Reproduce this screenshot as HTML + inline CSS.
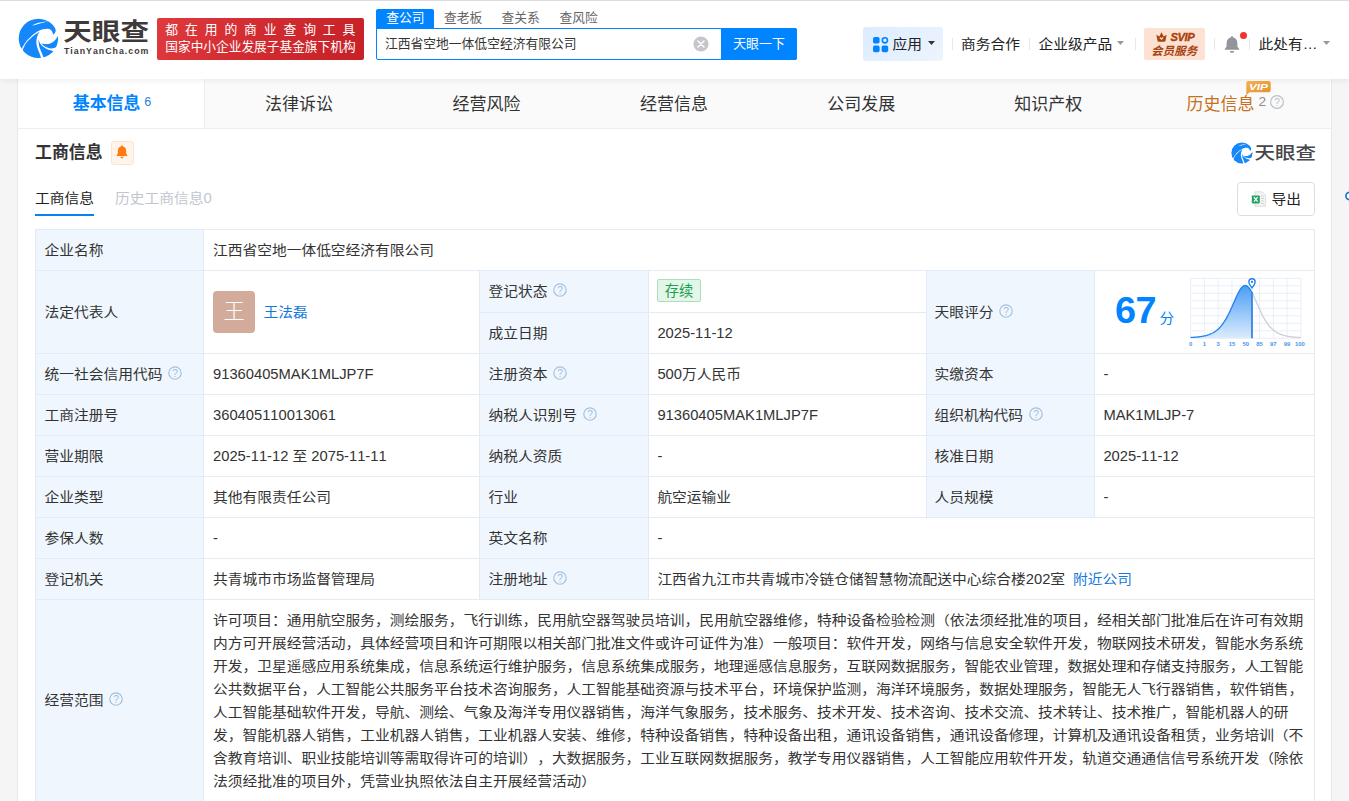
<!DOCTYPE html>
<html lang="zh-CN"><head><meta charset="utf-8"><title>江西省空地一体低空经济有限公司 - 天眼查</title>
<style>
html,body{margin:0;padding:0;}
body{width:1349px;height:801px;overflow:hidden;background:#f5f5f5;font-family:"Liberation Sans","Noto Sans CJK SC",sans-serif;font-size:14.74px;color:#333;}
#p{position:relative;width:1349px;height:801px;overflow:hidden;}
#p>div,#p>.a{position:absolute;}
.c{display:inline-block;transform:scaleY(0.89);transform-origin:0 53%;}
.t{white-space:nowrap;text-spacing-trim:space-all;font-kerning:none;height:20px;line-height:20px;}
</style></head><body><div id="p">
<div style="left:0px;top:0px;width:1349px;height:801px;background:#f5f5f5;"></div>
<div style="left:17px;top:79px;width:1315px;height:722px;background:#e9e9e9;"></div>
<div style="left:18px;top:79px;width:1313px;height:722px;background:#fff;"></div>
<div style="left:18px;top:79px;width:1312px;height:49px;background:#fafafa;"></div>
<div style="left:18px;top:79px;width:186px;height:49px;background:#fff;"></div>
<div style="left:204px;top:79px;width:1px;height:49px;background:#f0f0f0;"></div>
<div style="left:18px;top:128px;width:1313px;height:1px;background:#eeeeee;"></div>
<div style="left:0px;top:0px;width:1349px;height:79px;background:#fff;box-shadow:0 1px 6px rgba(0,0,0,.075);"></div>
<div style="left:0px;top:0px;width:1349px;height:1px;background:#dcdcdc;"></div>
<svg class="a" style="left:18px;top:18px" width="41" height="41" viewBox="0 0 41 41"><circle cx="20.4" cy="20.4" r="19.7" fill="#1487fa"/><path d="M21.6 13.7C20.75 14.24 18.06 15.77 16.50 16.95C14.94 18.13 13.66 19.39 12.24 20.77C10.82 22.15 9.32 23.25 8.00 25.22C6.68 27.19 4.92 31.37 4.30 32.60L3.20 31.30C4.00 30.04 6.49 25.74 8.00 23.74C9.51 21.74 10.83 20.66 12.24 19.28C13.65 17.90 14.93 16.59 16.49 15.46C18.05 14.33 20.16 13.20 21.58 12.49C22.99 11.78 23.57 11.50 24.98 11.22C26.39 10.94 28.66 10.58 30.07 10.79C31.48 11.00 32.62 11.64 33.47 12.49C34.32 13.34 34.80 15.20 35.16 15.88C35.52 16.57 35.53 16.48 35.60 16.60C35.83 16.30 36.65 15.49 37.00 14.80C37.35 14.12 37.66 13.37 37.71 12.49C37.76 11.61 37.36 10.02 37.29 9.52L41.00 9.50L41.00 18.40L39.62 18.43C39.44 18.71 39.23 19.28 38.56 20.13C37.89 20.98 36.79 22.56 35.59 23.52C34.39 24.48 32.76 25.43 31.34 25.86C29.93 26.29 28.41 26.19 27.10 26.07C25.79 25.95 24.09 25.30 23.49 25.14C23.88 25.58 24.88 27.05 25.83 27.77C26.78 28.49 27.95 29.03 29.22 29.47C30.49 29.91 31.94 30.45 33.47 30.40C35.00 30.35 37.58 29.40 38.40 29.20L40.00 31.00L37.00 35.00L35.60 33.40C35.25 33.24 34.53 32.81 33.47 32.44C32.41 32.07 30.63 31.80 29.22 31.16C27.80 30.52 26.18 29.61 24.98 28.62C23.78 27.63 22.74 26.49 22.00 25.22C21.26 23.95 20.77 21.69 20.52 20.98C20.55 21.69 20.55 23.80 20.73 25.22C20.91 26.63 21.15 28.05 21.58 29.47C22.00 30.88 22.71 32.30 23.28 33.71C23.85 35.12 24.54 36.86 24.98 37.96C25.42 39.06 25.75 39.91 25.90 40.30L23.30 41.00L22.43 37.96C22.22 37.39 21.69 35.98 21.16 34.56C20.63 33.15 19.71 31.03 19.25 29.47C18.79 27.91 18.51 26.63 18.40 25.22C18.29 23.80 18.36 22.39 18.61 20.98C18.86 19.57 19.38 17.94 19.88 16.73C20.38 15.52 21.31 14.21 21.60 13.70Z" fill="#fff"/><path d="M13.8 7.7C14.33 7.40 15.63 6.43 17.00 5.90C18.37 5.38 19.80 5.00 22.00 4.55C24.20 4.10 28.83 3.43 30.20 3.20C28.83 3.58 24.20 4.87 22.00 5.50C19.80 6.13 18.37 6.63 17.00 7.00C15.63 7.37 14.33 7.58 13.80 7.70Z" fill="#fff"/></svg>
<div class="t" style="left:63.2px;top:14.5px;font-size:28.6px;color:#3e3a39;height:34px;line-height:34px;font-weight:700;transform:scaleY(0.84);transform-origin:0 50%;">天眼查</div>
<div class="t" style="left:64px;top:45.0px;font-size:8.8px;color:#3e3a39;height:12px;line-height:12px;font-weight:700;letter-spacing:1.0px;">TianYanCha.com</div>
<div style="left:157px;top:18px;width:206.5px;height:42px;background:linear-gradient(120deg,#e0393e 0%,#d12b31 50%,#c52127 100%);border-radius:2px;"></div>
<div class="t" style="left:165.3px;top:22.0px;font-size:12.8px;color:#fff;height:16px;line-height:16px;letter-spacing:6.9px;">都在用的商业查询工具</div>
<div class="t" style="left:165.3px;top:38.8px;font-size:12.7px;color:#fff;height:16px;line-height:16px;">国家中小企业发展子基金旗下机构</div>
<div style="left:376px;top:9px;width:58px;height:20px;background:#0084ff;border-radius:2px 2px 0 0;"></div>
<div class="t" style="left:386.3px;top:9.2px;font-size:12.77px;color:#fff;height:18px;line-height:18px;">查公司</div>
<div class="t" style="left:444px;top:9.2px;font-size:12.77px;color:#666;height:18px;line-height:18px;">查老板</div>
<div class="t" style="left:501.5px;top:9.2px;font-size:12.77px;color:#666;height:18px;line-height:18px;">查关系</div>
<div class="t" style="left:559.5px;top:9.2px;font-size:12.77px;color:#666;height:18px;line-height:18px;">查风险</div>
<div style="left:376px;top:28px;width:421px;height:32px;background:#fff;border:1px solid #0084ff;border-radius:0 2px 2px 2px;box-sizing:border-box;"></div>
<div style="left:721px;top:28px;width:76px;height:32px;background:#0084ff;border-radius:0 2px 2px 0;"></div>
<div class="t" style="left:385px;top:34.0px;font-size:12.77px;color:#333;">江西省空地一体低空经济有限公司</div>
<div class="t" style="left:721.0px;top:34.0px;font-size:12.9px;color:#fff;width:76px;text-align:center;">天眼一下</div>
<svg class="a" style="left:693px;top:36px" width="16" height="16" viewBox="0 0 16 16"><circle cx="8" cy="8" r="7.6" fill="#c4c6cc"/><path d="M5 5 L11 11 M11 5 L5 11" stroke="#fff" stroke-width="1.5" stroke-linecap="round"/></svg>
<div style="left:863px;top:27px;width:80px;height:34px;background:linear-gradient(135deg,#dcecff 0%,#e6f1ff 60%,#edf4fc 100%);border-radius:3px;"></div>
<svg class="a" style="left:872px;top:35.6px" width="18" height="18" viewBox="0 0 18 18">
<rect x="1" y="1" width="6.6" height="6.6" rx="1.8" fill="#0084ff"/>
<rect x="1" y="9.6" width="6.6" height="6.6" rx="1.8" fill="#0084ff"/>
<rect x="9.6" y="9.6" width="6.6" height="6.6" rx="1.8" fill="#0084ff"/>
<circle cx="12.9" cy="4.3" r="2.6" fill="none" stroke="#0084ff" stroke-width="1.6"/></svg>
<div class="t" style="left:892.5px;top:34.0px;color:#222;"><span class="c">应用</span></div>
<svg class="a" style="left:927.7px;top:41.4px" width="7" height="4" viewBox="0 0 7 4"><path d="M0 0 H7 L3.5 4 Z" fill="#333"/></svg>
<div style="left:952px;top:38px;width:1px;height:12px;background:#e8e8eb;"></div>
<div style="left:1029px;top:38px;width:1px;height:12px;background:#e8e8eb;"></div>
<div style="left:1135px;top:38px;width:1px;height:12px;background:#e8e8eb;"></div>
<div style="left:1214px;top:38px;width:1px;height:12px;background:#e8e8eb;"></div>
<div style="left:1249px;top:38px;width:1px;height:12px;background:#e8e8eb;"></div>
<div class="t" style="left:961px;top:34.0px;color:#222;"><span class="c">商务合作</span></div>
<div class="t" style="left:1038.5px;top:34.0px;color:#222;"><span class="c">企业级产品</span></div>
<svg class="a" style="left:1117.0px;top:41.2px" width="7" height="4" viewBox="0 0 7 4"><path d="M0 0 H7 L3.5 4 Z" fill="#999"/></svg>
<div style="left:1144px;top:28px;width:61px;height:32px;background:#fde2d3;border-radius:2px;"></div>
<svg class="a" style="left:1156px;top:32px" width="12" height="11" viewBox="0 0 12 11"><path d="M0.4 2.7 L3.3 4.5 L5.5 0.3 L7.7 4.5 L10.6 2.7 L9.5 8.7 Q9.4 9.8 8.3 9.8 H2.7 Q1.6 9.8 1.5 8.7 Z" fill="#a8430f"/><path d="M3.8 5.5 L5.5 7.3 L7.2 5.5" fill="none" stroke="#fde2d3" stroke-width="1.1"/></svg>
<div class="t" style="left:1170.6px;top:31.2px;font-size:11.2px;color:#a8430f;height:12px;line-height:12px;font-weight:700;font-style:italic;letter-spacing:-0.5px;-webkit-text-stroke:0.35px #a8430f;">SVIP</div>
<div class="t" style="left:1143.8px;top:43.9px;font-size:11.4px;color:#a8430f;height:14px;line-height:14px;font-weight:700;font-style:italic;letter-spacing:0.1px;width:61px;text-align:center;">会员服务</div>
<svg class="a" style="left:1223px;top:35px" width="18" height="19" viewBox="0 0 18 19"><path d="M9 1.2 C9.8 1.2 10.3 1.8 10.3 2.5 C13 3.2 14.4 5.4 14.4 8.2 V11.6 L16.2 14 V14.8 H1.8 V14 L3.6 11.6 V8.2 C3.6 5.4 5 3.2 7.7 2.5 C7.7 1.8 8.2 1.2 9 1.2 Z" fill="#92959b"/><path d="M6.8 16 H11.2 C11 17.2 10.1 17.9 9 17.9 C7.9 17.9 7 17.2 6.8 16 Z" fill="#92959b"/></svg>
<div style="left:1240px;top:31.5px;width:7px;height:7px;background:#f5302f;border-radius:50%;"></div>
<div class="t" style="left:1258.5px;top:34.0px;color:#222;"><span class="c">此处有</span>…</div>
<svg class="a" style="left:1322.5px;top:41.2px" width="7" height="4" viewBox="0 0 7 4"><path d="M0 0 H7 L3.5 4 Z" fill="#999"/></svg>
<div class="t" style="left:72.8px;top:92.2px;font-size:16.9px;color:#0084ff;height:24px;line-height:24px;font-weight:700;">基本信息</div>
<div class="t" style="left:144.3px;top:94.2px;font-size:12.6px;color:#2a7fd8;height:16px;line-height:16px;">6</div>
<div class="t" style="left:149.0px;top:92.6px;font-size:17.0px;color:#333;height:24px;line-height:24px;width:300px;text-align:center;">法律诉讼</div>
<div class="t" style="left:336.5px;top:92.6px;font-size:17.0px;color:#333;height:24px;line-height:24px;width:300px;text-align:center;">经营风险</div>
<div class="t" style="left:524.0px;top:92.6px;font-size:17.0px;color:#333;height:24px;line-height:24px;width:300px;text-align:center;">经营信息</div>
<div class="t" style="left:711.3px;top:92.6px;font-size:17.0px;color:#333;height:24px;line-height:24px;width:300px;text-align:center;">公司发展</div>
<div class="t" style="left:898.3px;top:92.6px;font-size:17.0px;color:#333;height:24px;line-height:24px;width:300px;text-align:center;">知识产权</div>
<div class="t" style="left:1186.6px;top:92.7px;font-size:17.0px;color:#c4701c;height:24px;line-height:24px;">历史信息</div>
<div class="t" style="left:1258.6px;top:94.2px;font-size:13.7px;color:#8c8c8c;height:16px;line-height:16px;">2</div>
<svg class="a" style="left:1270.2px;top:95.2px" width="14" height="14" viewBox="0 0 14 14"><circle cx="7" cy="7" r="6.4" fill="none" stroke="#bcc0c6" stroke-width="1.15"/><text x="7" y="10.50" text-anchor="middle" font-size="10" fill="#bcc0c6" font-family="Liberation Sans,sans-serif">?</text></svg>
<svg class="a" style="left:1244px;top:80px" width="30" height="17" viewBox="0 0 30 17"><defs><linearGradient id="vg" x1="0" y1="0" x2="1" y2="1"><stop offset="0" stop-color="#f6b04f"/><stop offset="1" stop-color="#e0902f"/></linearGradient></defs><path d="M4.3 1.1 H24.7 Q26.7 1.1 26.7 3.1 V10.2 Q26.7 12.2 24.7 12.2 H5.6 L2.3 15.2 V3.1 Q2.3 1.1 4.3 1.1 Z" fill="url(#vg)"/><text x="4.9" y="9.9" textLength="19" lengthAdjust="spacingAndGlyphs" font-size="8.6" font-weight="700" font-style="italic" fill="#fff" font-family="Liberation Sans,sans-serif">VIP</text></svg>
<div class="t" style="left:35px;top:140.8px;font-size:16.9px;color:#333;height:24px;line-height:24px;font-weight:700;">工商信息</div>
<div style="left:111px;top:141px;width:23px;height:24px;background:#fff4ea;border:1px solid #fde3cb;border-radius:3px;box-sizing:border-box;"></div>
<svg class="a" style="left:116.3px;top:145.2px" width="12" height="14" viewBox="0 0 12 14"><path d="M6 0.6 C6.6 0.6 7 1 7 1.6 C9 2.1 10.2 3.8 10.2 6 V8.6 L11.4 10.4 V11 H0.6 V10.4 L1.8 8.6 V6 C1.8 3.8 3 2.1 5 1.6 C5 1 5.4 0.6 6 0.6 Z M4.4 11.8 H7.6 C7.4 12.8 6.8 13.3 6 13.3 C5.2 13.3 4.6 12.8 4.4 11.8 Z" fill="#ff7a14"/></svg>
<svg class="a" style="left:1231px;top:142px" width="22" height="22" viewBox="0 0 41 41"><circle cx="20.4" cy="20.4" r="19.7" fill="#1487fa"/><path d="M21.6 13.7C20.75 14.24 18.06 15.77 16.50 16.95C14.94 18.13 13.66 19.39 12.24 20.77C10.82 22.15 9.32 23.25 8.00 25.22C6.68 27.19 4.92 31.37 4.30 32.60L3.20 31.30C4.00 30.04 6.49 25.74 8.00 23.74C9.51 21.74 10.83 20.66 12.24 19.28C13.65 17.90 14.93 16.59 16.49 15.46C18.05 14.33 20.16 13.20 21.58 12.49C22.99 11.78 23.57 11.50 24.98 11.22C26.39 10.94 28.66 10.58 30.07 10.79C31.48 11.00 32.62 11.64 33.47 12.49C34.32 13.34 34.80 15.20 35.16 15.88C35.52 16.57 35.53 16.48 35.60 16.60C35.83 16.30 36.65 15.49 37.00 14.80C37.35 14.12 37.66 13.37 37.71 12.49C37.76 11.61 37.36 10.02 37.29 9.52L41.00 9.50L41.00 18.40L39.62 18.43C39.44 18.71 39.23 19.28 38.56 20.13C37.89 20.98 36.79 22.56 35.59 23.52C34.39 24.48 32.76 25.43 31.34 25.86C29.93 26.29 28.41 26.19 27.10 26.07C25.79 25.95 24.09 25.30 23.49 25.14C23.88 25.58 24.88 27.05 25.83 27.77C26.78 28.49 27.95 29.03 29.22 29.47C30.49 29.91 31.94 30.45 33.47 30.40C35.00 30.35 37.58 29.40 38.40 29.20L40.00 31.00L37.00 35.00L35.60 33.40C35.25 33.24 34.53 32.81 33.47 32.44C32.41 32.07 30.63 31.80 29.22 31.16C27.80 30.52 26.18 29.61 24.98 28.62C23.78 27.63 22.74 26.49 22.00 25.22C21.26 23.95 20.77 21.69 20.52 20.98C20.55 21.69 20.55 23.80 20.73 25.22C20.91 26.63 21.15 28.05 21.58 29.47C22.00 30.88 22.71 32.30 23.28 33.71C23.85 35.12 24.54 36.86 24.98 37.96C25.42 39.06 25.75 39.91 25.90 40.30L23.30 41.00L22.43 37.96C22.22 37.39 21.69 35.98 21.16 34.56C20.63 33.15 19.71 31.03 19.25 29.47C18.79 27.91 18.51 26.63 18.40 25.22C18.29 23.80 18.36 22.39 18.61 20.98C18.86 19.57 19.38 17.94 19.88 16.73C20.38 15.52 21.31 14.21 21.60 13.70Z" fill="#fff"/><path d="M13.8 7.7C14.33 7.40 15.63 6.43 17.00 5.90C18.37 5.38 19.80 5.00 22.00 4.55C24.20 4.10 28.83 3.43 30.20 3.20C28.83 3.58 24.20 4.87 22.00 5.50C19.80 6.13 18.37 6.63 17.00 7.00C15.63 7.37 14.33 7.58 13.80 7.70Z" fill="#fff"/></svg>
<div class="t" style="left:1254.6px;top:139.6px;font-size:20.5px;color:#46464b;height:26px;line-height:26px;font-weight:500;transform:scaleY(0.85);transform-origin:0 50%;">天眼查</div>
<div class="t" style="left:35px;top:187.8px;color:#222;"><span class="c">工商信息</span></div>
<div class="t" style="left:115px;top:187.8px;color:#c1c6cf;"><span class="c">历史工商信息</span>0</div>
<div style="left:35px;top:214px;width:59px;height:2px;background:#0a80f5;"></div>
<div style="left:1237px;top:182px;width:78px;height:34px;background:#fff;border:1px solid #dadde5;border-radius:4px;box-sizing:border-box;"></div>
<svg class="a" style="left:1251px;top:191px" width="16" height="16" viewBox="0 0 16 16"><path d="M4 0.8 H11 L14.6 4.4 V15.2 H4 Z" fill="#f4f4f4" stroke="#d4d4d4" stroke-width="0.8"/><path d="M10 5 H13 M10 7.5 H13 M10 10 H13 M10 12.5 H13" stroke="#cfcfcf" stroke-width="0.9"/><rect x="0.8" y="4.4" width="8" height="8" rx="0.8" fill="#21a366"/><path d="M3 6.2 L6.6 10.6 M6.6 6.2 L3 10.6" stroke="#fff" stroke-width="1.2"/></svg>
<div class="t" style="left:1271.5px;top:189.0px;color:#222;"><span class="c">导出</span></div>
<svg class="a" style="left:1340px;top:190px" width="12" height="12" viewBox="0 0 12 12"><circle cx="9.6" cy="6" r="3.7" fill="#fff" stroke="#1672d6" stroke-width="1.6"/></svg>
<div style="left:36px;top:230px;width:167px;height:571px;background:#eff6fd;"></div>
<div style="left:480px;top:271px;width:168px;height:328px;background:#eff6fd;"></div>
<div style="left:927px;top:271px;width:167px;height:246px;background:#eff6fd;"></div>
<div style="left:35px;top:229px;width:1280px;height:1px;background:#e3ecf5;"></div>
<div style="left:35px;top:270px;width:1280px;height:1px;background:#e3ecf5;"></div>
<div style="left:35px;top:353px;width:1280px;height:1px;background:#e3ecf5;"></div>
<div style="left:35px;top:394px;width:1280px;height:1px;background:#e3ecf5;"></div>
<div style="left:35px;top:435px;width:1280px;height:1px;background:#e3ecf5;"></div>
<div style="left:35px;top:476px;width:1280px;height:1px;background:#e3ecf5;"></div>
<div style="left:35px;top:517px;width:1280px;height:1px;background:#e3ecf5;"></div>
<div style="left:35px;top:558px;width:1280px;height:1px;background:#e3ecf5;"></div>
<div style="left:35px;top:599px;width:1280px;height:1px;background:#e3ecf5;"></div>
<div style="left:479px;top:312px;width:447px;height:1px;background:#e3ecf5;"></div>
<div style="left:35px;top:229px;width:1px;height:572px;background:#e3ecf5;"></div>
<div style="left:1314px;top:229px;width:1px;height:572px;background:#e3ecf5;"></div>
<div style="left:203px;top:229px;width:1px;height:572px;background:#e3ecf5;"></div>
<div style="left:479px;top:270px;width:1px;height:329px;background:#e3ecf5;"></div>
<div style="left:648px;top:270px;width:1px;height:329px;background:#e3ecf5;"></div>
<div style="left:926px;top:270px;width:1px;height:247px;background:#e3ecf5;"></div>
<div style="left:1094px;top:270px;width:1px;height:247px;background:#e3ecf5;"></div>
<div class="t" style="left:44.6px;top:240.0px;"><span class="c">企业名称</span></div>
<div class="t" style="left:213px;top:240.0px;"><span class="c">江西省空地一体低空经济有限公司</span></div>
<div class="t" style="left:44.6px;top:302.0px;"><span class="c">法定代表人</span></div>
<div style="left:213px;top:291px;width:42px;height:42px;background:#d3ab9b;border-radius:4px;"></div>
<div class="t" style="left:213.0px;top:299.0px;font-size:21.2px;color:#fff;height:26px;line-height:26px;font-weight:300;width:42px;text-align:center;">王</div>
<div class="t" style="left:263.5px;top:302.0px;color:#1379de;"><span class="c">王法磊</span></div>
<div class="t" style="left:488.6px;top:280.8px;"><span class="c">登记状态</span></div>
<svg class="a" style="left:553.46px;top:282.90000000000003px" width="14" height="14" viewBox="0 0 14 14"><circle cx="7" cy="7" r="6.2" fill="none" stroke="#a4c0e0" stroke-width="1.15"/><text x="7" y="10.57" text-anchor="middle" font-size="10.2" fill="#a4c0e0" font-family="Liberation Sans,sans-serif">?</text></svg>
<div style="left:657px;top:279px;width:44px;height:23px;background:#e3f6e9;border:1px solid #a9dfba;border-radius:2px;box-sizing:border-box;"></div>
<div class="t" style="left:657.0px;top:280.9px;font-size:14.2978px;color:#1ba04f;width:44px;text-align:center;">存续</div>
<div class="t" style="left:488.6px;top:323.0px;"><span class="c">成立日期</span></div>
<div class="t" style="left:657.4px;top:323.0px;">2025-11-12</div>
<div class="t" style="left:934.6px;top:302.0px;"><span class="c">天眼评分</span></div>
<svg class="a" style="left:999.46px;top:304.1px" width="14" height="14" viewBox="0 0 14 14"><circle cx="7" cy="7" r="6.2" fill="none" stroke="#a4c0e0" stroke-width="1.15"/><text x="7" y="10.57" text-anchor="middle" font-size="10.2" fill="#a4c0e0" font-family="Liberation Sans,sans-serif">?</text></svg>
<div class="t" style="left:1115px;top:290.4px;font-size:37.8px;color:#0084ff;height:40px;line-height:40px;font-weight:700;letter-spacing:-0.4px;">67</div>
<div class="t" style="left:1159.5px;top:307.6px;color:#0084ff;"><span class="c">分</span></div>
<div class="t" style="left:44.6px;top:364.0px;"><span class="c">统一社会信用代码</span></div>
<svg class="a" style="left:168.42000000000002px;top:366.1px" width="14" height="14" viewBox="0 0 14 14"><circle cx="7" cy="7" r="6.2" fill="none" stroke="#a4c0e0" stroke-width="1.15"/><text x="7" y="10.57" text-anchor="middle" font-size="10.2" fill="#a4c0e0" font-family="Liberation Sans,sans-serif">?</text></svg>
<div class="t" style="left:213px;top:364.0px;">91360405MAK1MLJP7F</div>
<div class="t" style="left:488.6px;top:364.0px;"><span class="c">注册资本</span></div>
<svg class="a" style="left:553.46px;top:366.1px" width="14" height="14" viewBox="0 0 14 14"><circle cx="7" cy="7" r="6.2" fill="none" stroke="#a4c0e0" stroke-width="1.15"/><text x="7" y="10.57" text-anchor="middle" font-size="10.2" fill="#a4c0e0" font-family="Liberation Sans,sans-serif">?</text></svg>
<div class="t" style="left:657.4px;top:364.0px;">500<span class="c">万人民币</span></div>
<div class="t" style="left:934.6px;top:364.0px;"><span class="c">实缴资本</span></div>
<div class="t" style="left:1103.4px;top:364.0px;">-</div>
<div class="t" style="left:44.6px;top:405.0px;"><span class="c">工商注册号</span></div>
<div class="t" style="left:213px;top:405.0px;">360405110013061</div>
<div class="t" style="left:488.6px;top:405.0px;"><span class="c">纳税人识别号</span></div>
<svg class="a" style="left:582.9399999999999px;top:407.1px" width="14" height="14" viewBox="0 0 14 14"><circle cx="7" cy="7" r="6.2" fill="none" stroke="#a4c0e0" stroke-width="1.15"/><text x="7" y="10.57" text-anchor="middle" font-size="10.2" fill="#a4c0e0" font-family="Liberation Sans,sans-serif">?</text></svg>
<div class="t" style="left:657.4px;top:405.0px;">91360405MAK1MLJP7F</div>
<div class="t" style="left:934.6px;top:405.0px;"><span class="c">组织机构代码</span></div>
<svg class="a" style="left:1028.94px;top:407.1px" width="14" height="14" viewBox="0 0 14 14"><circle cx="7" cy="7" r="6.2" fill="none" stroke="#a4c0e0" stroke-width="1.15"/><text x="7" y="10.57" text-anchor="middle" font-size="10.2" fill="#a4c0e0" font-family="Liberation Sans,sans-serif">?</text></svg>
<div class="t" style="left:1103.4px;top:405.0px;">MAK1MLJP-7</div>
<div class="t" style="left:44.6px;top:446.0px;"><span class="c">营业期限</span></div>
<div class="t" style="left:213px;top:446.0px;">2025-11-12 <span class="c">至</span> 2075-11-11</div>
<div class="t" style="left:488.6px;top:446.0px;"><span class="c">纳税人资质</span></div>
<div class="t" style="left:657.4px;top:446.0px;">-</div>
<div class="t" style="left:934.6px;top:446.0px;"><span class="c">核准日期</span></div>
<div class="t" style="left:1103.4px;top:446.0px;">2025-11-12</div>
<div class="t" style="left:44.6px;top:487.0px;"><span class="c">企业类型</span></div>
<div class="t" style="left:213px;top:487.0px;"><span class="c">其他有限责任公司</span></div>
<div class="t" style="left:488.6px;top:487.0px;"><span class="c">行业</span></div>
<div class="t" style="left:657.4px;top:487.0px;"><span class="c">航空运输业</span></div>
<div class="t" style="left:934.6px;top:487.0px;"><span class="c">人员规模</span></div>
<div class="t" style="left:1103.4px;top:487.0px;">-</div>
<div class="t" style="left:44.6px;top:528.0px;"><span class="c">参保人数</span></div>
<div class="t" style="left:213px;top:528.0px;">-</div>
<div class="t" style="left:488.6px;top:528.0px;"><span class="c">英文名称</span></div>
<div class="t" style="left:657.4px;top:528.0px;">-</div>
<div class="t" style="left:44.6px;top:569.0px;"><span class="c">登记机关</span></div>
<div class="t" style="left:213px;top:569.0px;"><span class="c">共青城市市场监督管理局</span></div>
<div class="t" style="left:488.6px;top:569.0px;"><span class="c">注册地址</span></div>
<svg class="a" style="left:553.46px;top:571.1px" width="14" height="14" viewBox="0 0 14 14"><circle cx="7" cy="7" r="6.2" fill="none" stroke="#a4c0e0" stroke-width="1.15"/><text x="7" y="10.57" text-anchor="middle" font-size="10.2" fill="#a4c0e0" font-family="Liberation Sans,sans-serif">?</text></svg>
<div class="t" style="left:657.4px;top:569.0px;"><span class="c">江西省九江市共青城市冷链仓储智慧物流配送中心综合楼</span>202<span class="c">室</span><span style="color:#1379de;margin-left:8px"><span class="c">附近公司</span></span></div>
<div class="t" style="left:44.6px;top:690.3px;"><span class="c">经营范围</span></div>
<svg class="a" style="left:109.46000000000001px;top:692.4px" width="14" height="14" viewBox="0 0 14 14"><circle cx="7" cy="7" r="6.2" fill="none" stroke="#a4c0e0" stroke-width="1.15"/><text x="7" y="10.57" text-anchor="middle" font-size="10.2" fill="#a4c0e0" font-family="Liberation Sans,sans-serif">?</text></svg>
<div class="t" style="left:213px;top:609.6px;"><span class="c">许可项目：通用航空服务，测绘服务，飞行训练，民用航空器驾驶员培训，民用航空器维修，特种设备检验检测（依法须经批准的项目，经相关部门批准后在许可有效期</span></div>
<div class="t" style="left:213px;top:632.6px;"><span class="c">内方可开展经营活动，具体经营项目和许可期限以相关部门批准文件或许可证件为准）一般项目：软件开发，网络与信息安全软件开发，物联网技术研发，智能水务系统</span></div>
<div class="t" style="left:213px;top:655.6px;"><span class="c">开发，卫星遥感应用系统集成，信息系统运行维护服务，信息系统集成服务，地理遥感信息服务，互联网数据服务，智能农业管理，数据处理和存储支持服务，人工智能</span></div>
<div class="t" style="left:213px;top:678.6px;"><span class="c">公共数据平台，人工智能公共服务平台技术咨询服务，人工智能基础资源与技术平台，环境保护监测，海洋环境服务，数据处理服务，智能无人飞行器销售，软件销售，</span></div>
<div class="t" style="left:213px;top:701.6px;"><span class="c">人工智能基础软件开发，导航、测绘、气象及海洋专用仪器销售，海洋气象服务，技术服务、技术开发、技术咨询、技术交流、技术转让、技术推广，智能机器人的研</span></div>
<div class="t" style="left:213px;top:724.6px;"><span class="c">发，智能机器人销售，工业机器人销售，工业机器人安装、维修，特种设备销售，特种设备出租，通讯设备销售，通讯设备修理，计算机及通讯设备租赁，业务培训（不</span></div>
<div class="t" style="left:213px;top:747.6px;"><span class="c">含教育培训、职业技能培训等需取得许可的培训），大数据服务，工业互联网数据服务，教学专用仪器销售，人工智能应用软件开发，轨道交通通信信号系统开发（除依</span></div>
<div class="t" style="left:213px;top:770.6px;"><span class="c">法须经批准的项目外，凭营业执照依法自主开展经营活动）</span></div>
<svg class="a" style="left:1184px;top:274px;overflow:visible" width="124" height="76" viewBox="-6.60 -4.30 124 76"><path d="M0.00 0 V60.00" stroke="#e6edf8" stroke-width="0.9"/><path d="M13.79 0 V60.00" stroke="#e6edf8" stroke-width="0.9"/><path d="M27.58 0 V60.00" stroke="#e6edf8" stroke-width="0.9"/><path d="M41.36 0 V60.00" stroke="#e6edf8" stroke-width="0.9"/><path d="M55.15 0 V60.00" stroke="#e6edf8" stroke-width="0.9"/><path d="M68.94 0 V60.00" stroke="#e6edf8" stroke-width="0.9"/><path d="M82.73 0 V60.00" stroke="#e6edf8" stroke-width="0.9"/><path d="M96.51 0 V60.00" stroke="#e6edf8" stroke-width="0.9"/><path d="M110.30 0 V60.00" stroke="#e6edf8" stroke-width="0.9"/><path d="M0 0.00 H110.30" stroke="#e6edf8" stroke-width="0.9"/><path d="M0 7.50 H110.30" stroke="#e6edf8" stroke-width="0.9"/><path d="M0 15.00 H110.30" stroke="#e6edf8" stroke-width="0.9"/><path d="M0 22.50 H110.30" stroke="#e6edf8" stroke-width="0.9"/><path d="M0 30.00 H110.30" stroke="#e6edf8" stroke-width="0.9"/><path d="M0 37.50 H110.30" stroke="#e6edf8" stroke-width="0.9"/><path d="M0 45.00 H110.30" stroke="#e6edf8" stroke-width="0.9"/><path d="M0 52.50 H110.30" stroke="#e6edf8" stroke-width="0.9"/><path d="M0 60.00 H110.30" stroke="#e6edf8" stroke-width="0.9"/><defs><linearGradient id="cg" x1="0" y1="0" x2="0" y2="1"><stop offset="0" stop-color="#4a9df5"/><stop offset="1" stop-color="#dcecfd"/></linearGradient></defs><path d="M0.00 59.18 L0.50 59.16 L1.00 59.13 L1.50 59.11 L2.00 59.08 L2.50 59.05 L3.00 59.02 L3.50 58.98 L4.00 58.95 L4.50 58.91 L5.00 58.87 L5.50 58.82 L6.00 58.78 L6.50 58.73 L7.00 58.68 L7.50 58.63 L8.00 58.57 L8.50 58.51 L9.00 58.45 L9.50 58.38 L10.00 58.31 L10.50 58.24 L11.00 58.16 L11.50 58.08 L12.00 57.99 L12.50 57.89 L13.00 57.80 L13.50 57.69 L14.00 57.58 L14.50 57.47 L15.00 57.35 L15.50 57.22 L16.00 57.08 L16.50 56.94 L17.00 56.78 L17.50 56.62 L18.00 56.45 L18.50 56.28 L19.00 56.09 L19.50 55.89 L20.00 55.68 L20.50 55.46 L21.00 55.23 L21.50 54.98 L22.00 54.73 L22.50 54.45 L23.00 54.17 L23.50 53.87 L24.00 53.55 L24.50 53.22 L25.00 52.87 L25.50 52.50 L26.00 52.12 L26.50 51.72 L27.00 51.29 L27.50 50.85 L28.00 50.38 L28.50 49.89 L29.00 49.38 L29.50 48.85 L30.00 48.29 L30.50 47.71 L31.00 47.10 L31.50 46.47 L32.00 45.81 L32.50 45.12 L33.00 44.40 L33.50 43.66 L34.00 42.89 L34.50 42.09 L35.00 41.26 L35.50 40.40 L36.00 39.52 L36.50 38.61 L37.00 37.67 L37.50 36.70 L38.00 35.71 L38.50 34.70 L39.00 33.66 L39.50 32.60 L40.00 31.52 L40.50 30.42 L41.00 29.31 L41.50 28.18 L42.00 27.04 L42.50 25.90 L43.00 24.75 L43.50 23.60 L44.00 22.46 L44.50 21.32 L45.00 20.20 L45.50 19.09 L46.00 18.00 L46.50 16.94 L47.00 15.91 L47.50 14.91 L48.00 13.96 L48.50 13.05 L49.00 12.19 L49.50 11.38 L50.00 10.64 L50.50 9.96 L51.00 9.34 L51.50 8.80 L52.00 8.33 L52.50 7.94 L53.00 7.63 L53.50 7.41 L54.00 7.26 L54.50 7.20 L55.00 7.23 L55.50 7.34 L56.00 7.53 L56.50 7.81 L57.00 8.17 L57.50 8.60 L58.00 9.12 L58.50 9.70 L59.00 10.36 L59.50 11.08 L60.00 11.86 L60.50 12.70 L61.00 13.59 L61.4 60.00 L0 60.00 Z" fill="url(#cg)"/><path d="M61.50 14.53 L62.00 15.51 L62.50 16.52 L63.00 17.57 L63.50 18.65 L64.00 19.75 L64.50 20.87 L65.00 22.00 L65.50 23.15 L66.00 24.29 L66.50 25.44 L67.00 26.59 L67.50 27.73 L68.00 28.86 L68.50 29.98 L69.00 31.08 L69.50 32.17 L70.00 33.24 L70.50 34.28 L71.00 35.31 L71.50 36.31 L72.00 37.29 L72.50 38.24 L73.00 39.16 L73.50 40.05 L74.00 40.92 L74.50 41.76 L75.00 42.57 L75.50 43.35 L76.00 44.11 L76.50 44.84 L77.00 45.53 L77.50 46.21 L78.00 46.85 L78.50 47.47 L79.00 48.06 L79.50 48.63 L80.00 49.17 L80.50 49.69 L81.00 50.19 L81.50 50.66 L82.00 51.12 L82.50 51.55 L83.00 51.96 L83.50 52.35 L84.00 52.73 L84.50 53.08 L85.00 53.42 L85.50 53.74 L86.00 54.05 L86.50 54.34 L87.00 54.62 L87.50 54.88 L88.00 55.13 L88.50 55.37 L89.00 55.59 L89.50 55.81 L90.00 56.01 L90.50 56.20 L91.00 56.38 L91.50 56.56 L92.00 56.72 L92.50 56.88 L93.00 57.02 L93.50 57.16 L94.00 57.29 L94.50 57.42 L95.00 57.54 L95.50 57.65 L96.00 57.76 L96.50 57.86 L97.00 57.95 L97.50 58.04 L98.00 58.13 L98.50 58.21 L99.00 58.28 L99.50 58.35 L100.00 58.42 L100.50 58.49 L101.00 58.55 L101.50 58.61 L102.00 58.66 L102.50 58.71 L103.00 58.76 L103.50 58.81 L104.00 58.85 L104.50 58.89 L105.00 58.93 L105.50 58.97 L106.00 59.00 L106.50 59.04 L107.00 59.07 L107.50 59.10 L108.00 59.12 L108.50 59.15 L109.00 59.17 L109.50 59.20 L110.00 59.22" fill="none" stroke="#cdd1d7" stroke-width="1.35"/><path d="M0.00 59.18 L0.50 59.16 L1.00 59.13 L1.50 59.11 L2.00 59.08 L2.50 59.05 L3.00 59.02 L3.50 58.98 L4.00 58.95 L4.50 58.91 L5.00 58.87 L5.50 58.82 L6.00 58.78 L6.50 58.73 L7.00 58.68 L7.50 58.63 L8.00 58.57 L8.50 58.51 L9.00 58.45 L9.50 58.38 L10.00 58.31 L10.50 58.24 L11.00 58.16 L11.50 58.08 L12.00 57.99 L12.50 57.89 L13.00 57.80 L13.50 57.69 L14.00 57.58 L14.50 57.47 L15.00 57.35 L15.50 57.22 L16.00 57.08 L16.50 56.94 L17.00 56.78 L17.50 56.62 L18.00 56.45 L18.50 56.28 L19.00 56.09 L19.50 55.89 L20.00 55.68 L20.50 55.46 L21.00 55.23 L21.50 54.98 L22.00 54.73 L22.50 54.45 L23.00 54.17 L23.50 53.87 L24.00 53.55 L24.50 53.22 L25.00 52.87 L25.50 52.50 L26.00 52.12 L26.50 51.72 L27.00 51.29 L27.50 50.85 L28.00 50.38 L28.50 49.89 L29.00 49.38 L29.50 48.85 L30.00 48.29 L30.50 47.71 L31.00 47.10 L31.50 46.47 L32.00 45.81 L32.50 45.12 L33.00 44.40 L33.50 43.66 L34.00 42.89 L34.50 42.09 L35.00 41.26 L35.50 40.40 L36.00 39.52 L36.50 38.61 L37.00 37.67 L37.50 36.70 L38.00 35.71 L38.50 34.70 L39.00 33.66 L39.50 32.60 L40.00 31.52 L40.50 30.42 L41.00 29.31 L41.50 28.18 L42.00 27.04 L42.50 25.90 L43.00 24.75 L43.50 23.60 L44.00 22.46 L44.50 21.32 L45.00 20.20 L45.50 19.09 L46.00 18.00 L46.50 16.94 L47.00 15.91 L47.50 14.91 L48.00 13.96 L48.50 13.05 L49.00 12.19 L49.50 11.38 L50.00 10.64 L50.50 9.96 L51.00 9.34 L51.50 8.80 L52.00 8.33 L52.50 7.94 L53.00 7.63 L53.50 7.41 L54.00 7.26 L54.50 7.20 L55.00 7.23 L55.50 7.34 L56.00 7.53 L56.50 7.81 L57.00 8.17 L57.50 8.60 L58.00 9.12 L58.50 9.70 L59.00 10.36 L59.50 11.08 L60.00 11.86 L60.50 12.70 L61.00 13.59" fill="none" stroke="#1f82ee" stroke-width="1.3"/><path d="M61.4 13.33 V60.00" stroke="#2a7fe0" stroke-width="1.7"/><path d="M61.4 9.6 C60.1 7.4 58.3 6.0 58.3 3.6 A3.1 3.1 0 1 1 64.5 3.6 C64.5 6.0 62.699999999999996 7.4 61.4 9.6 Z" fill="#fff" stroke="#1f7fe8" stroke-width="1.35"/><circle cx="61.4" cy="3.6" r="1.05" fill="#1f7fe8"/><text x="0.00" y="67.60" text-anchor="middle" font-size="5.9" font-weight="700" fill="#4a96ea" font-family="Liberation Sans,sans-serif">0</text><text x="13.79" y="67.60" text-anchor="middle" font-size="5.9" font-weight="700" fill="#4a96ea" font-family="Liberation Sans,sans-serif">1</text><text x="27.58" y="67.60" text-anchor="middle" font-size="5.9" font-weight="700" fill="#4a96ea" font-family="Liberation Sans,sans-serif">3</text><text x="41.36" y="67.60" text-anchor="middle" font-size="5.9" font-weight="700" fill="#4a96ea" font-family="Liberation Sans,sans-serif">15</text><text x="55.15" y="67.60" text-anchor="middle" font-size="5.9" font-weight="700" fill="#4a96ea" font-family="Liberation Sans,sans-serif">50</text><text x="68.94" y="67.60" text-anchor="middle" font-size="5.9" font-weight="700" fill="#4a96ea" font-family="Liberation Sans,sans-serif">85</text><text x="82.73" y="67.60" text-anchor="middle" font-size="5.9" font-weight="700" fill="#4a96ea" font-family="Liberation Sans,sans-serif">97</text><text x="96.51" y="67.60" text-anchor="middle" font-size="5.9" font-weight="700" fill="#4a96ea" font-family="Liberation Sans,sans-serif">99</text><text x="109.30" y="67.60" text-anchor="middle" font-size="5.9" font-weight="700" fill="#4a96ea" font-family="Liberation Sans,sans-serif">100</text></svg>
</div></body></html>
